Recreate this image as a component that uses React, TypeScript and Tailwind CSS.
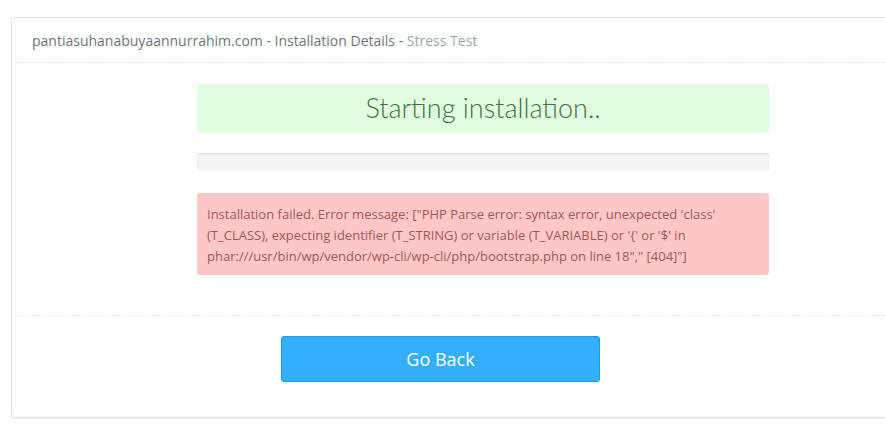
export default function App() {
  return (
    <div className="w-[885px] h-[435px] overflow-hidden bg-white pl-[11px] pt-[17px] font-['Open_Sans',sans-serif]">
      <div className="w-[890px] rounded-[3px] border border-[#e1e5eb] shadow-[0_1px_1px_rgba(0,0,0,0.06)] bg-white">
        {/* header */}
        <div className="mx-[5px] border-b border-dashed border-[#e3e7ee] px-[15px] pt-[13px] pb-[11px] text-[14px] leading-[20px] text-[#6c757d]">
          pantiasuhanabuyaannurrahim.com - Installation Details -{' '}
          <span className="text-[#98a6ad]">Stress Test</span>
        </div>

        {/* body */}
        <div className="mx-[5px] border-b border-dashed border-[#e3e7ee] pt-[21px] pb-[40px]">
          <div className="ml-[180px] w-[572px]">
            <div className="h-[49px] rounded-[3px] bg-[#e3fde3] flex items-center justify-center font-['Lato',sans-serif] font-light text-[27px] text-[#3c763d]">
              Starting installation..
            </div>
            <div className="mt-[20px] h-[18px] rounded-[3px] bg-[#f5f5f5] shadow-[inset_0_1px_2px_rgba(0,0,0,0.1)]" />
            <div className="mt-[22px] rounded-[3px] bg-[#ffc7c7] px-[10px] pt-[11px] pb-[8px] text-[13px] leading-[21px] text-[#a0595a]">
              Installation failed. Error message: ["PHP Parse error: syntax error, unexpected 'class'
              (T_CLASS), expecting identifier (T_STRING) or variable (T_VARIABLE) or '{'{'}' or '$' in
              phar:///usr/bin/wp/vendor/wp-cli/wp-cli/php/bootstrap.php on line 18"," [404]"]
            </div>
          </div>
        </div>

        {/* footer */}
        <div className="pt-[20px] pb-[35px]">
          <button className="ml-[269px] w-[319px] h-[46px] rounded-[3px] border border-[#1a9cf2] bg-[#35aefe] text-white text-[18px]">
            Go Back
          </button>
        </div>
      </div>
    </div>
  );
}
